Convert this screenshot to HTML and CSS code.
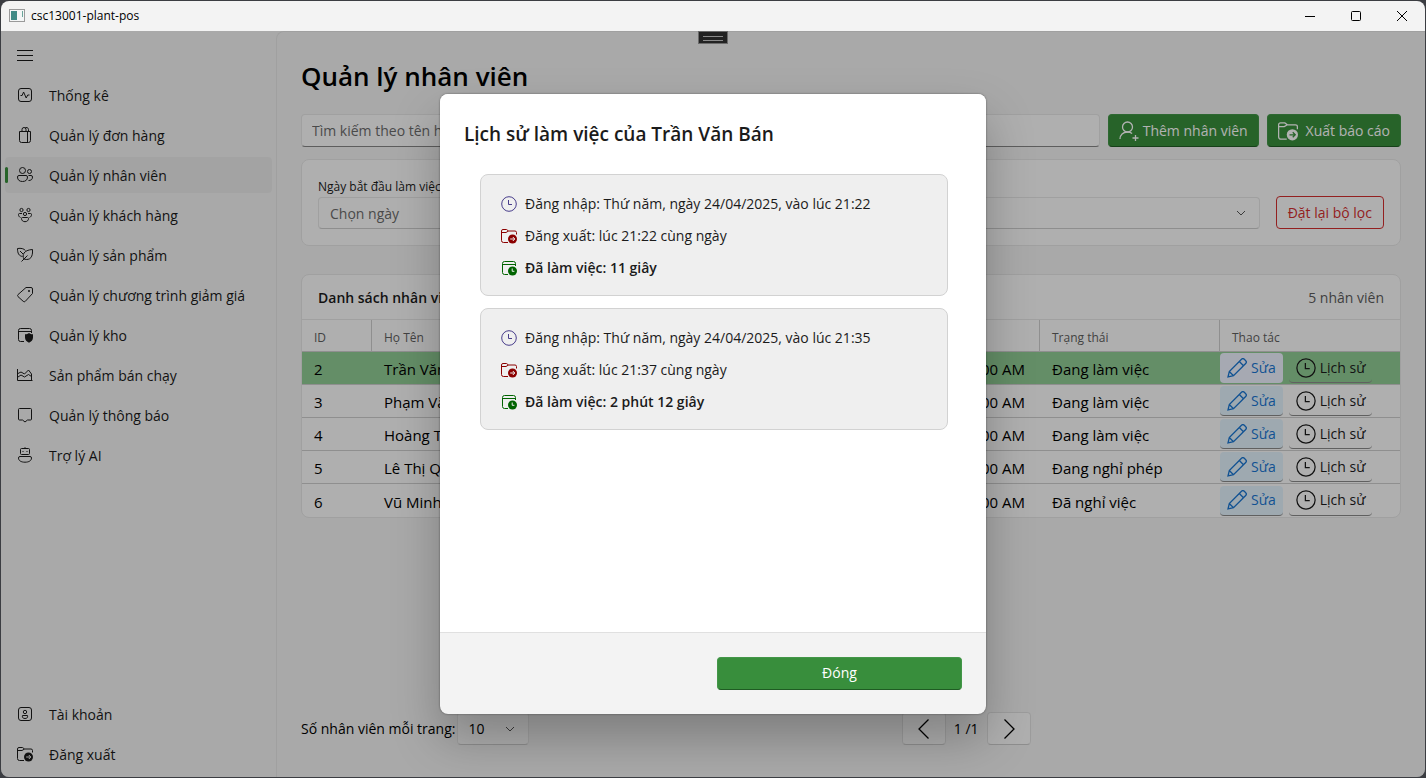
FILE: index.html
```html
<!DOCTYPE html>
<html lang="vi">
<head>
<meta charset="utf-8">
<title>csc13001-plant-pos</title>
<link rel="stylesheet" href="styles.css">
</head>
<body>
<svg class="defs" aria-hidden="true">
  <symbol id="i-menu" viewBox="0 0 16 16"><path d="M0 3.5h16M0 8.5h16M0 13.5h16"/></symbol>
  <symbol id="i-pulse" viewBox="0 0 16 16"><rect x="1.5" y="1.5" width="13" height="13" rx="2.5"/><path d="M3.5 8.5h1.6L6.6 5l2.6 6 1.5-3h1.8"/></symbol>
  <symbol id="i-bag" viewBox="0 0 16 16"><path d="M2.5 4.5h11v9a2 2 0 0 1-2 2h-7a2 2 0 0 1-2-2zM10.5 4.5v11M5 4.500V2.500a2 2 0 0 1 4 0v2M8 1.200a2 2 0 0 1 3.500 1.300v2"/></symbol>
  <symbol id="i-people" viewBox="0 0 16 16"><circle cx="5.500" cy="3.500" r="3"/><circle cx="12.500" cy="4.500" r="2"/><path d="M2 8.500h7a1.500 1.500 0 0 1 1.500 1.500c0 3-2 4.500-5 4.500s-5-1.500-5-4.500A1.500 1.500 0 0 1 2 8.500zM11.500 8.500h2.500a1.500 1.500 0 0 1 1.500 1.500c0 2.500-1.500 3.500-4 3.500"/></symbol>
  <symbol id="i-group" viewBox="0 0 16 16"><circle cx="4.500" cy="3" r="1.600"/><circle cx="11.500" cy="3" r="1.600"/><circle cx="8" cy="7" r="1.600"/><path d="M5.500 10.500h5a1 1 0 0 1 1 1c0 2-1.500 3.200-3.500 3.200s-3.500-1.200-3.500-3.200a1 1 0 0 1 1-1zM5 6.500H2.500a1 1 0 0 0-1 1c0 1.500.8 2.500 2 3M11 6.500h2.500a1 1 0 0 1 1 1c0 1.500-.8 2.500-2 3"/></symbol>
  <symbol id="i-leaf" viewBox="0 0 16 16"><path d="M5.500 9.500C2 9 .5 6.500.5 1.500c3.500-.5 6.500 0 8 2.200M3 4l3 3M4.500 14.500l6-6M7 12c-2.200-3.800-.5-9 8.500-9.500.5 7-2 11.500-8.500 9.500z"/></symbol>
  <symbol id="i-tag" viewBox="0 0 16 16"><path d="M9 .5h5a1.500 1.500 0 0 1 1.500 1.500v4.500L8.300 14.300a1.500 1.500 0 0 1-2.100 0L1 9.600a1.500 1.500 0 0 1 0-2z"/><circle cx="12" cy="4" r="1" class="solid"/></symbol>
  <symbol id="i-box-shield" viewBox="0 0 16 16"><path d="M7 14.500H3.500a2 2 0 0 1-2-2v-9a2 2 0 0 1 2-2h9a2 2 0 0 1 2 2V6M1.500 4.500h13"/><path class="solid" d="M12 6c1 .8 2.300 1.200 4 1.300v3.200c0 2.400-1.700 4.200-4 5.300-2.300-1.100-4-2.900-4-5.300V7.300c1.700-.1 3-.5 4-1.300z"/></symbol>
  <symbol id="i-area" viewBox="0 0 16 16"><path d="M.5 2v11.500h15M1 6.500l3-1.500 3.500 2L11.500 3l3 4v6.500M1 10l3-2 3.500 2 4-2.500 3 2"/></symbol>
  <symbol id="i-comment" viewBox="0 0 16 16"><path d="M2.500 1.500h11a1 1 0 0 1 1 1V12a1 1 0 0 1-1 1h-3L8 15l-2.500-2h-3a1 1 0 0 1-1-1V2.500a1 1 0 0 1 1-1z"/></symbol>
  <symbol id="i-bot" viewBox="0 0 16 16"><rect x="3.500" y="1.500" width="9" height="6" rx="1"/><path d="M8 .2v1.300M3 9.500h10a1.500 1.500 0 0 1 1.500 1.500c0 2.600-2.500 4.200-6.500 4.200S1.500 13.600 1.500 11A1.500 1.500 0 0 1 3 9.500z"/><path class="solid" d="M5.500 4h1v1h-1zM9.500 4h1v1h-1z"/></symbol>
  <symbol id="i-account" viewBox="0 0 16 16"><rect x="1.500" y="1.500" width="13" height="13" rx="2.500"/><circle cx="8" cy="6" r="1.700"/><path d="M5.500 9.500h5c.5 2-.5 3-2.500 3s-3-1-2.500-3z"/></symbol>
  <symbol id="i-folder" viewBox="0 0 16 16"><path d="M7 14.500H2.500a2 2 0 0 1-2-2V3a1.500 1.500 0 0 1 1.500-1.500h3.500l2 1.500H14A1.500 1.500 0 0 1 15.500 4.500V6.500M.5 4.500H5L7.500 3"/><circle class="solid" cx="11.500" cy="11" r="4.500"/><path class="cut" d="M9.200 11h4.300M11.800 9l2 2-2 2"/></symbol>
  <symbol id="i-clock" viewBox="0 0 16 16"><circle cx="8" cy="8" r="7.300"/><path d="M7.500 4v4.500H11"/></symbol>
  <symbol id="i-cal-clock" viewBox="0 0 16 16"><path d="M7 14.500H3.500a2 2 0 0 1-2-2v-9a2 2 0 0 1 2-2h9a2 2 0 0 1 2 2V6M1.500 4.500h13"/><circle class="solid" cx="11.500" cy="11" r="4.500"/><path class="cut" d="M11.200 8.500v2.800h2.200"/></symbol>
  <symbol id="i-person-add" viewBox="0 0 20 20"><circle cx="8.500" cy="6" r="5"/><path d="M1 18c0-4 3-7 7.500-7 2 0 3.500.6 4.600 1.500M16.500 14v6M13.500 17h6"/></symbol>
  <symbol id="i-pencil" viewBox="0 0 20 20"><path d="M1 19l1.300-5.500L14.500 1.300a2 2 0 0 1 2.800 0l1.400 1.400a2 2 0 0 1 0 2.800L6.500 17.700zM12.300 3.500l4.200 4.200M2.300 13.500l4.200 4.200"/></symbol>
  <symbol id="i-left" viewBox="0 0 20 20"><path d="M14.500 0.500L5 10l9.500 9.500"/></symbol>
  <symbol id="i-right" viewBox="0 0 20 20"><path d="M5.500 .5L15 10l-9.500 9.500"/></symbol>
  <symbol id="i-down" viewBox="0 0 10 10"><path d="M1 3l4 4 4-4"/></symbol>
  <symbol id="i-min" viewBox="0 0 10 10"><path d="M0 5.500h10"/></symbol>
  <symbol id="i-max" viewBox="0 0 10 10"><rect x=".5" y=".5" width="9" height="9" rx="1"/></symbol>
  <symbol id="i-close" viewBox="0 0 10 10"><path d="M0 0l10 10M10 0L0 10"/></symbol>
</svg>

<div class="window">
  <header class="titlebar">
    <svg class="app-icon" viewBox="0 0 16 14" aria-hidden="true">
      <rect class="app-frame" x=".5" y=".5" width="15" height="12"/>
      <rect class="app-pane" x="2" y="2" width="6" height="9"/>
      <rect class="app-side" x="13" y="2" width="1" height="6"/>
    </svg>
    <span class="app-name">csc13001-plant-pos</span>
    <div class="caption-buttons">
      <button aria-label="Thu nhỏ"><svg class="ico cap"><use href="#i-min"/></svg></button>
      <button aria-label="Phóng to"><svg class="ico cap"><use href="#i-max"/></svg></button>
      <button aria-label="Đóng cửa sổ"><svg class="ico cap"><use href="#i-close"/></svg></button>
    </div>
  </header>

  <div class="client">
    <nav class="sidebar">
      <button class="nav-item" aria-label="Menu"><svg class="ico"><use href="#i-menu"/></svg></button>
      <a class="nav-item" href="#"><svg class="ico"><use href="#i-pulse"/></svg><span>Thống kê</span></a>
      <a class="nav-item" href="#"><svg class="ico"><use href="#i-bag"/></svg><span>Quản lý đơn hàng</span></a>
      <a class="nav-item selected" href="#"><svg class="ico"><use href="#i-people"/></svg><span>Quản lý nhân viên</span></a>
      <a class="nav-item" href="#"><svg class="ico"><use href="#i-group"/></svg><span>Quản lý khách hàng</span></a>
      <a class="nav-item" href="#"><svg class="ico"><use href="#i-leaf"/></svg><span>Quản lý sản phẩm</span></a>
      <a class="nav-item" href="#"><svg class="ico"><use href="#i-tag"/></svg><span>Quản lý chương trình giảm giá</span></a>
      <a class="nav-item" href="#"><svg class="ico"><use href="#i-box-shield"/></svg><span>Quản lý kho</span></a>
      <a class="nav-item" href="#"><svg class="ico"><use href="#i-area"/></svg><span>Sản phẩm bán chạy</span></a>
      <a class="nav-item" href="#"><svg class="ico"><use href="#i-comment"/></svg><span>Quản lý thông báo</span></a>
      <a class="nav-item" href="#"><svg class="ico"><use href="#i-bot"/></svg><span>Trợ lý AI</span></a>
      <div class="spacer"></div>
      <a class="nav-item" href="#"><svg class="ico"><use href="#i-account"/></svg><span>Tài khoản</span></a>
      <a class="nav-item" href="#"><svg class="ico cut-gray"><use href="#i-folder"/></svg><span>Đăng xuất</span></a>
    </nav>

    <main class="content">
      <h1>Quản lý nhân viên</h1>
      <div class="toolbar">
        <input class="field search" type="text" aria-label="Tìm kiếm" placeholder="Tìm kiếm theo tên h">
        <button class="btn primary"><svg class="ico big"><use href="#i-person-add"/></svg>Thêm nhân viên</button>
        <button class="btn primary wide-gap"><svg class="ico big thin cut-green"><use href="#i-folder"/></svg>Xuất báo cáo</button>
      </div>

      <section class="card filters">
        <div class="filter">
          <label for="start">Ngày bắt đầu làm việc</label>
          <input class="field" id="start" type="text" placeholder="Chọn ngày">
        </div>
        <div class="filter">
          <label for="state">Trạng thái</label>
          <div class="select">
            <select class="field" id="state"><option></option></select>
            <svg class="ico cap"><use href="#i-down"/></svg>
          </div>
        </div>
        <button class="btn reset">Đặt lại bộ lọc</button>
      </section>

      <section class="card list">
        <div class="list-head"><h2>Danh sách nhân viên</h2><span>5 nhân viên</span></div>
        <table>
          <colgroup><col class="c-id"><col><col><col class="c-state"><col class="c-act"></colgroup>
          <thead><tr><th>ID</th><th>Họ Tên</th><th></th><th>Trạng thái</th><th>Thao tác</th></tr></thead>
          <tbody>
            <tr class="current"><td>2</td><td>Trần Văn Bán</td><td class="date">12:00:00 AM</td><td>Đang làm việc</td><td class="actions"><div><button class="row-btn edit"><svg class="ico big"><use href="#i-pencil"/></svg>Sửa</button><button class="row-btn"><svg class="ico big thin"><use href="#i-clock"/></svg>Lịch sử</button></div></td></tr>
            <tr><td>3</td><td>Phạm Văn</td><td class="date">12:00:00 AM</td><td>Đang làm việc</td><td class="actions"><div><button class="row-btn edit"><svg class="ico big"><use href="#i-pencil"/></svg>Sửa</button><button class="row-btn"><svg class="ico big thin"><use href="#i-clock"/></svg>Lịch sử</button></div></td></tr>
            <tr><td>4</td><td>Hoàng T</td><td class="date">12:00:00 AM</td><td>Đang làm việc</td><td class="actions"><div><button class="row-btn edit"><svg class="ico big"><use href="#i-pencil"/></svg>Sửa</button><button class="row-btn"><svg class="ico big thin"><use href="#i-clock"/></svg>Lịch sử</button></div></td></tr>
            <tr><td>5</td><td>Lê Thị Q</td><td class="date">12:00:00 AM</td><td>Đang nghỉ phép</td><td class="actions"><div><button class="row-btn edit"><svg class="ico big"><use href="#i-pencil"/></svg>Sửa</button><button class="row-btn"><svg class="ico big thin"><use href="#i-clock"/></svg>Lịch sử</button></div></td></tr>
            <tr><td>6</td><td>Vũ Minh</td><td class="date">12:00:00 AM</td><td>Đã nghỉ việc</td><td class="actions"><div><button class="row-btn edit"><svg class="ico big"><use href="#i-pencil"/></svg>Sửa</button><button class="row-btn"><svg class="ico big thin"><use href="#i-clock"/></svg>Lịch sử</button></div></td></tr>
          </tbody>
        </table>
      </section>

      <div class="spacer"></div>
      <footer class="pager">
        <label for="size">Số nhân viên mỗi trang:</label>
        <div class="select size">
          <select class="field" id="size"><option>10</option></select>
          <svg class="ico cap"><use href="#i-down"/></svg>
        </div>
        <div class="pages">
          <button class="btn page-btn" aria-label="Trang trước"><svg class="ico big"><use href="#i-left"/></svg></button>
          <span>1 /1</span>
          <button class="btn page-btn" aria-label="Trang sau"><svg class="ico big"><use href="#i-right"/></svg></button>
        </div>
      </footer>
    </main>

    <div class="overlay">
      <div class="dialog" role="dialog" aria-labelledby="dlg-title">
        <div class="dialog-body">
          <h2 id="dlg-title">Lịch sử làm việc của Trần Văn Bán</h2>
          <ul class="sessions">
            <li>
              <p><svg class="ico in"><use href="#i-clock"/></svg>Đăng nhập: Thứ năm, ngày 24/04/2025, vào lúc 21:22</p>
              <p><svg class="ico out"><use href="#i-folder"/></svg>Đăng xuất: lúc 21:22 cùng ngày</p>
              <p class="total"><svg class="ico done"><use href="#i-cal-clock"/></svg>Đã làm việc: 11 giây</p>
            </li>
            <li>
              <p><svg class="ico in"><use href="#i-clock"/></svg>Đăng nhập: Thứ năm, ngày 24/04/2025, vào lúc 21:35</p>
              <p><svg class="ico out"><use href="#i-folder"/></svg>Đăng xuất: lúc 21:37 cùng ngày</p>
              <p class="total"><svg class="ico done"><use href="#i-cal-clock"/></svg>Đã làm việc: 2 phút 12 giây</p>
            </li>
          </ul>
        </div>
        <div class="dialog-foot"><button class="btn primary">Đóng</button></div>
      </div>
    </div>
    <div class="debug-bar"></div>
  </div>
</div>
</body>
</html>
```
FILE: styles.css
```css
* { box-sizing: border-box; }

body {
  margin: 0;
  height: 100vh;
  padding: 1px;
  background: #3b3d42;
  color: #1b1b1b;
  font: 14px/20px "Open Sans", "Noto Sans", sans-serif;
}

h1, h2, p, ul { margin: 0; padding: 0; }
button, input, select { font: inherit; color: inherit; }
button { border: 0; background: none; padding: 0; }

.defs { position: absolute; width: 0; height: 0; }
.ico { width: 16px; height: 16px; flex: none; fill: none; stroke: currentColor; stroke-width: 1; --cut: #efefef; }
.ico.big { width: 20px; height: 20px; stroke-width: 1.3; }
.ico.thin { stroke-width: 1; }
.ico.cap { width: 10px; height: 10px; }
.cut-gray { --cut: #f3f3f3; }
.cut-green { --cut: #388e3c; }
.solid { fill: currentColor; stroke: none; }
.cut { stroke: var(--cut); }
.spacer { flex: 1; }

.window {
  display: flex;
  flex-direction: column;
  height: 100%;
  border-radius: 8px;
  overflow: hidden;
  background: #f3f3f3;
}

.titlebar { display: flex; align-items: center; height: 30px; padding-left: 8px; flex: none; }
.app-icon { width: 16px; height: 14px; }
.app-frame { fill: #f4f6f6; stroke: #9a9a9a; }
.app-pane { fill: #3f8a85; }
.app-side { fill: #6aa59a; }
.app-name { flex: 1; margin-left: 6px; font-size: 12px; color: #000; }
.caption-buttons { display: flex; height: 100%; color: #000; }
.caption-buttons button { display: flex; align-items: center; justify-content: center; width: 46px; }

.client { position: relative; display: flex; flex: 1; min-height: 0; }

.sidebar { display: flex; flex-direction: column; gap: 4px; width: 275px; flex: none; padding: 6px 4px 5px; }
.nav-item {
  display: flex;
  align-items: center;
  gap: 16px;
  min-height: 36px;
  padding: 0 12px;
  border-radius: 4px;
  color: #1b1b1b;
  text-decoration: none;
}
.nav-item span { padding-top: 2px; }
.nav-item.selected { position: relative; background: #eaeaea; }
.nav-item.selected::before {
  content: "";
  position: absolute;
  left: 0;
  top: 10px;
  width: 3px;
  height: 16px;
  border-radius: 2px;
  background: #388e3c;
}

.content {
  display: flex;
  flex-direction: column;
  flex: 1;
  min-width: 0;
  padding: 24px 24px 32px;
  border: solid #e5e5e5;
  border-width: 1px 0 0 1px;
  border-top-left-radius: 8px;
}
h1 { font-size: 26px; line-height: 40px; font-weight: 600; color: #000; }

.toolbar { display: flex; gap: 8px; margin-top: 18px; }
.field {
  width: 100%;
  height: 33px;
  padding: 0 10px;
  border: 1px solid #e5e5e5;
  border-bottom-color: #cccccc;
  border-radius: 4px;
  background: #fbfbfb;
  appearance: none;
}
.field::placeholder { color: #6b6b6b; opacity: 1; }
.search { flex: 1; width: 0; border-bottom-color: #868686; }

.btn {
  display: flex;
  align-items: center;
  justify-content: center;
  gap: 4px;
  height: 33px;
  padding: 0 10px;
  border: 1px solid #e0e0e0;
  border-bottom-color: #cccccc;
  border-radius: 4px;
  background: #fbfbfb;
  white-space: nowrap;
}
.primary { border-color: #439648; border-bottom-color: #1f5c23; background: #388e3c; color: #fff; }
.wide-gap { gap: 8px; }

.card { border: 1px solid #e5e5e5; border-radius: 8px; background: #fbfbfb; }
.filters { display: flex; align-items: flex-end; gap: 16px; margin-top: 12px; padding: 16px; }
.filter { flex: 1; }
.filter label { display: block; font-size: 12px; line-height: 21px; }
.filter .field { display: block; height: 32px; padding: 0 11px; }
.select { position: relative; }
.select .ico { position: absolute; right: 14px; top: 50%; margin-top: -5px; color: #555; }
.reset { padding: 0 11px; border-color: #d32f2f; color: #d32f2f; }

.list { margin-top: 28px; overflow: hidden; }
.list-head { display: flex; justify-content: space-between; padding: 13px 16px 11px; color: #5c5c5c; }
.list-head h2 { font-size: 14px; font-weight: 600; color: #1b1b1b; }

table { width: 100%; table-layout: fixed; border-collapse: separate; border-spacing: 0; border-top: 1px solid #e5e5e5; color: #000; }
.c-id { width: 70px; }
.c-state, .c-act { width: 180px; }
th, td { padding: 0 12px; text-align: left; font-weight: 400; white-space: nowrap; border-bottom: 1px solid #cdcdcd; }
th { height: 32px; padding-top: 5px; font-size: 12px; color: #5f5f5f; border-right: 1px solid #cdcdcd; }
th:last-child { border-right: 0; }
td { height: 33px; padding-top: 2px; font-size: 15px; }
tr:last-child td { border-bottom: 0; }
.current td { background: #90cc94; }
.date { text-align: right; padding-right: 15px; }
.actions { padding: 0; font-size: 14px; }
.actions div { display: flex; gap: 6px; }
.row-btn {
  display: flex;
  align-items: center;
  gap: 4px;
  height: 30px;
  padding: 0 7px;
  border-bottom: 1px solid #8a8a8a;
  border-radius: 4px;
  color: #1b1b1b;
}
.row-btn.edit { background: #e3f2fd; color: #1976d2; }
.current .edit { background: #eef3ff; border-bottom-color: transparent; }

.pager { display: flex; align-items: center; gap: 2px; color: #000; }
.select.size { width: 72px; }
.pages { display: flex; flex: 1; align-items: center; justify-content: center; gap: 8px; }
.page-btn { width: 44px; }

.overlay {
  position: absolute;
  inset: 0;
  display: flex;
  align-items: center;
  justify-content: center;
  background: rgba(0, 0, 0, 0.3);
}
.dialog {
  display: flex;
  flex-direction: column;
  width: 546px;
  height: 83%;
  border-radius: 8px;
  overflow: hidden;
  background: #f3f3f3;
  box-shadow: 0 0 2px rgba(0, 0, 0, 0.5), 0 24px 48px rgba(0, 0, 0, 0.26);
}
.dialog-body { flex: 1; padding: 24px; background: #fff; border-bottom: 1px solid #e0e0e0; }
.dialog-body h2 { font-size: 19px; line-height: 32px; font-weight: 600; }
.sessions { display: flex; flex-direction: column; gap: 12px; padding: 24px 14px 0 16px; list-style: none; }
.sessions li {
  display: flex;
  flex-direction: column;
  gap: 12px;
  padding: 19px 20px 17px;
  border: 1px solid #d2d2d2;
  border-radius: 8px;
  background: #efefef;
}
.sessions p { display: flex; align-items: center; gap: 8px; }
.total { font-weight: 600; }
.in { color: #483d8b; }
.out { color: #8b0000; }
.done { color: #006400; }
.dialog-foot { display: flex; justify-content: flex-end; padding: 24px; }
.dialog-foot .btn { width: 245px; }

.debug-bar {
  position: absolute;
  top: 0;
  left: 50%;
  width: 30px;
  height: 13px;
  margin-left: -15px;
  border: 1px solid #6a6a6a;
  background: #222;
}
.debug-bar::before {
  content: "";
  position: absolute;
  left: 4px;
  right: 4px;
  top: 4px;
  height: 3px;
  border: solid #8a8a8a;
  border-width: 1px 0;
}
```
